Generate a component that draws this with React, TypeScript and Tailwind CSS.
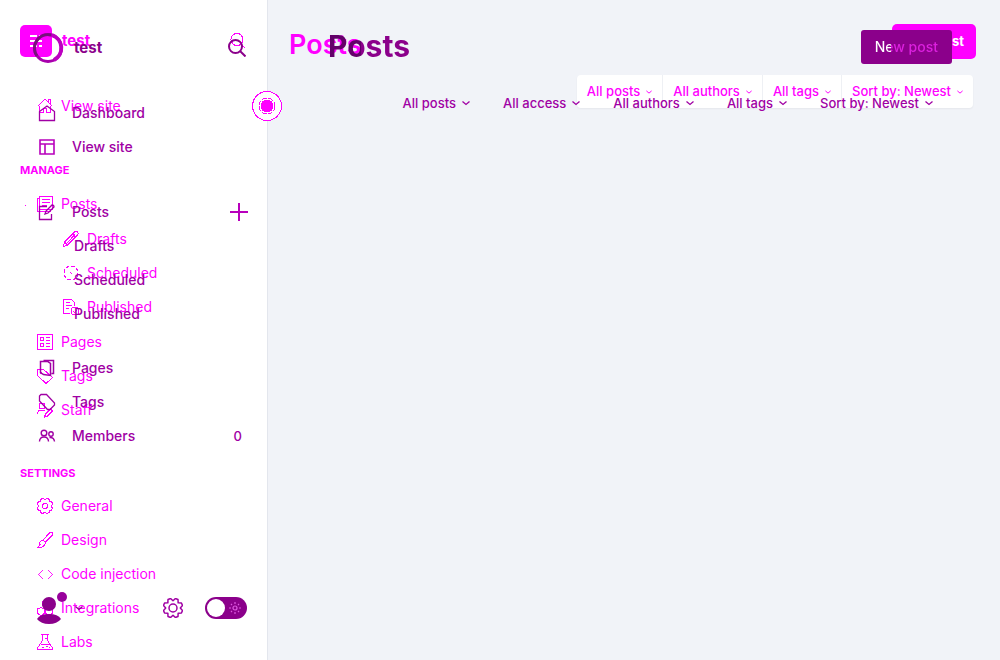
import type { ReactNode } from "react";

type IconName =
  | "house" | "stack" | "pencil" | "clock" | "published" | "list" | "tag" | "staff"
  | "gear" | "brush" | "code" | "modules" | "flask"
  | "home" | "layout" | "edit" | "pages" | "label" | "members";

const gearOutline =
  "M10 2.700 12.450.5 15 1.550 15.150 4.850 18.450 5 19.500 7.550 17.300 10 19.500 12.450 18.450 15 15.150 15.150 15 18.450 12.450 19.500 10 17.300 7.550 19.500 5 18.450 4.850 15.150 1.550 15 .5 12.450 2.700 10 .5 7.550 1.550 5 4.850 4.850 5 1.550 7.550.5z";

const drawings: Record<IconName, ReactNode> = {
  house: <path d="M.5 8.500 8 1l7.500 7.500M11.500 4.500V1.500h2v5M2.500 8v6.500h4v-4h3v4h4V8" />,
  stack: <path d="M2.500.5h13v13h-13zM2.500 2.500h-2v13h13v-2M5 3.500h8M5 6.500h8M5 9.500h5" />,
  pencil: <path d="m.5 15.500 1-4.500L11 1.500q2-2 3.500-.5t-.5 3.500L4.500 14zM1.500 11 5 14.500M4 12l8-8.500M9.500 3l3.500 3.500" />,
  clock: (
    <>
      <circle cx="8" cy="8" r="7" strokeDasharray="3.500 2" />
      <path d="M7 7l2 2" />
    </>
  ),
  published: (
    <>
      <path d="M7 14.500H.5V.5h8l3 3V7M3 3.500h4M3 6.500h6M3 9.500h3" />
      <circle cx="12" cy="12" r="4" />
      <path d="m10 12 1.500 1.500L14 11" />
    </>
  ),
  list: <path d="M.5.5h15v15H.5zM3.500 3.500h3v3h-3zM3.500 9.500h3v3h-3zM8.500 3.500H13M8.500 6.500H13M8.500 9.500H13M8.500 12.500H13" />,
  tag: (
    <>
      <path d="M.5 1.500h6l9 8-6.500 6-8.500-8z" />
      <circle cx="4" cy="5" r="1" />
    </>
  ),
  staff: (
    <>
      <circle cx="5" cy="4" r="3" />
      <path d="M.5 12q0-4 4.500-4 2.500 0 3.500 1.500M7.500 15l1-3 5-5 2 2-5 5z" />
    </>
  ),
  gear: (
    <>
      <circle cx="8" cy="8" r="2.500" />
      <path d={gearOutline} transform="scale(.8)" strokeWidth="1.250" />
    </>
  ),
  brush: <path d="m6 8 6.500-7q2-1.500 3 0t0 2L8.500 10zM6 8Q2 9 3 12.500q-1 2-2.500 3Q8 16 8.500 10" />,
  code: <path d="M5 3.500.5 8 5 12.500M11 3.500 15.500 8 11 12.500" strokeWidth=".9" />,
  modules: (
    <>
      <path d="M5.500 2 8 .5 10.500 2v3.500L8 7 5.500 5.500z" />
      <path d="M.5 9 4 7.500 7.500 9v4.500L4 15.500.5 13.500zM8.500 9 12 7.500 15.500 9v4.500l-3.500 2-3.500-2z" />
    </>
  ),
  flask: <path d="M4 .5h8M5.500.5v6L.5 14v1.500h15V14l-5-7.500v-6M7.500 4H10M3.500 10h9M5 13h2M9 12h2M12 13.500h1" />,
  home: <path d="M.5 6.500 8 1l7.500 5.500v9H.5z" strokeWidth="1.300" />,
  layout: <path d="M1 1h14v14H1zM1 5h14M6 5v10" strokeWidth="1.600" stroke="#b800bc" />,
  edit: <path d="M8 2.500H.5v13h12V10M6 10l1-3 6-6q2 0 2 2L9 9z" strokeWidth="1.300" />,
  pages: <path d="M4.500.5h10v13h-2M1.500 1.500h7l3 2v12l-7-1-3-2z" strokeWidth="1.500" />,
  label: <path d="M.5 2 2 .5h5.500L15.500 9v2L11 15.500H8.500L.5 7z" strokeWidth="1.300" />,
  members: (
    <>
      <circle cx="5" cy="5" r="2.800" strokeWidth="1.400" />
      <circle cx="12" cy="6" r="2.200" strokeWidth="1.400" />
      <path d="M.5 13.500Q.5 9 5 9t4.500 4.500M10.500 9.500q4.500-.5 5 4" strokeWidth="1.400" />
    </>
  ),
};

function Icon({ name, smooth = false }: { name: IconName; smooth?: boolean }) {
  return (
    <svg
      viewBox="0 0 16 16"
      className="size-4 shrink-0 overflow-visible"
      fill="none"
      stroke="currentColor"
      shapeRendering={smooth ? "auto" : "crispEdges"}
      aria-hidden="true"
    >
      {drawings[name]}
    </svg>
  );
}

function Chevron({ small = false }: { small?: boolean }) {
  return (
    <svg viewBox="0 0 8 8" className={small ? "w-1.5 shrink-0" : "w-2 shrink-0"} fill="none" stroke="currentColor" strokeWidth="1.300" aria-hidden="true">
      <path d="m.5 2.500 3.500 3 3.500-3" />
    </svg>
  );
}

function OldItem({ icon, children, sub = false }: { icon: IconName; children: string; sub?: boolean }) {
  return (
    <li>
      <a href="#" className={sub ? "flex h-[34px] items-center gap-2 pl-[63px]" : "flex h-[34px] items-center gap-2 pl-[37px]"}>
        <Icon name={icon} />
        {children}
      </a>
    </li>
  );
}

function NewItem({ icon, children, extra }: { icon?: IconName; children: string; extra?: ReactNode }) {
  return (
    <li className={icon ? "flex h-[34px] items-center pl-[39px] pr-5" : "flex h-[34px] items-center pl-[74px]"}>
      <a href="#" className="flex flex-1 items-center gap-[17px]">
        {icon && <Icon name={icon} smooth />}
        {children}
      </a>
      {extra}
    </li>
  );
}

const oldFilters = ["All posts", "All authors", "All tags", "Sort by: Newest"];
const newFilters = ["All posts", "All access", "All authors", "All tags", "Sort by: Newest"];

function CompactScreen() {
  return (
    <div className="flex text-[#ff00ff] [grid-area:1/1]">
      <aside className="w-[268px] shrink-0 border-r border-[#e3e6ed] bg-white text-sm">
        <div className="flex h-[82px] items-center pl-5 pr-[22px]">
          <svg viewBox="0 0 32 32" className="size-8" aria-hidden="true">
            <rect width="32" height="32" rx="5" fill="currentColor" />
            <path d="M10 11h7M19 11h3M10 16h12M10 21h7M19 21h3" stroke="white" strokeWidth="2" />
          </svg>
          <span className="ml-2.5 flex-1 text-[15px] font-bold">test</span>
          <button aria-label="Search site">
            <svg viewBox="0 0 16 16" className="size-4" fill="none" stroke="currentColor" shapeRendering="crispEdges">
              <circle cx="8" cy="6.500" r="6" />
              <path d="m12 11 4.500 4.500" />
            </svg>
          </button>
        </div>
        <ul className="pt-[7px]">
          <OldItem icon="house">View site</OldItem>
        </ul>
        <h2 className="mt-[39px] pl-5 text-[11px] leading-4 font-bold">MANAGE</h2>
        <ul className="pt-[9px]">
          <li className="relative">
            <span className="absolute left-[25px] top-[18px] size-px bg-current" />
            <ul><OldItem icon="stack">Posts</OldItem></ul>
            <ul className="py-px">
              <OldItem icon="pencil" sub>Drafts</OldItem>
              <OldItem icon="clock" sub>Scheduled</OldItem>
              <OldItem icon="published" sub>Published</OldItem>
            </ul>
          </li>
          <OldItem icon="list">Pages</OldItem>
          <OldItem icon="tag">Tags</OldItem>
          <OldItem icon="staff">Staff</OldItem>
        </ul>
        <h2 className="mt-[38px] pl-5 text-[11px] leading-4 font-bold">SETTINGS</h2>
        <ul className="pt-2">
          <OldItem icon="gear">General</OldItem>
          <OldItem icon="brush">Design</OldItem>
          <OldItem icon="code">Code injection</OldItem>
          <OldItem icon="modules">Integrations</OldItem>
          <OldItem icon="flask">Labs</OldItem>
        </ul>
      </aside>
      <main className="min-w-0 flex-1 bg-[#f1f3f8]">
        <header className="flex items-start justify-between pl-[21px] pr-6 pt-6">
          <h1 className="text-[27px] leading-[42px] font-semibold">Posts</h1>
          <button className="h-[35px] rounded-[5px] bg-[#ff00ff] px-3 text-[13px] font-bold text-white">New post</button>
        </header>
        <div className="mt-[9px] flex justify-end pr-[27px]">
          <div className="flex h-[33px] divide-x divide-[#eef0f4] rounded-[4px] bg-white text-[13px] font-medium shadow-xs">
            {oldFilters.map((filter) => (
              <button key={filter} className="flex items-center gap-1.5 px-2.5">
                {filter}
                <Chevron small />
              </button>
            ))}
          </div>
        </div>
      </main>
    </div>
  );
}

function WideScreen() {
  return (
    <div className="z-10 flex text-[#a000a4] [grid-area:1/1]">
      <aside className="flex w-[268px] shrink-0 flex-col text-sm font-medium">
        <div className="flex h-24 items-center pl-8 pr-[22px] text-[#8b008b]">
          <svg viewBox="0 0 32 32" className="size-8" fill="none" aria-hidden="true">
            <circle cx="16" cy="16" r="13.500" stroke="#a800ac" strokeWidth="3" />
            <path d="M20 3.200A13.500 13.500 0 0 1 22 28" stroke="#bd00c1" strokeWidth="4" />
            <path d="M5 24A13.500 13.500 0 0 1 19 3" stroke="#76127a" strokeWidth="3" />
          </svg>
          <span className="ml-2.5 flex-1 text-[15px] font-bold">test</span>
          <button aria-label="Search">
            <svg viewBox="0 0 18 18" className="size-[18px]" fill="none" stroke="currentColor" strokeWidth="2">
              <circle cx="7.500" cy="7.500" r="6.500" />
              <path d="m12 12 5.500 5.500" />
            </svg>
          </button>
        </div>
        <ul>
          <NewItem icon="home">Dashboard</NewItem>
          <NewItem icon="layout">View site</NewItem>
        </ul>
        <ul className="mt-[31px]">
          <NewItem
            icon="edit"
            extra={
              <button aria-label="Create post">
                <svg viewBox="0 0 18 18" className="size-[18px]" fill="none" stroke="#b800bc" strokeWidth="2">
                  <path d="M9 0v18M0 9h18" />
                </svg>
              </button>
            }
          >
            Posts
          </NewItem>
          <NewItem>Drafts</NewItem>
          <NewItem>Scheduled</NewItem>
          <NewItem>Published</NewItem>
        </ul>
        <ul className="mt-5">
          <NewItem icon="pages">Pages</NewItem>
          <NewItem icon="label">Tags</NewItem>
          <NewItem icon="members" extra={<span className="pr-1.5 text-[13px]">0</span>}>Members</NewItem>
        </ul>
        <div className="mt-auto flex h-[104px] items-center pl-[37px] pr-[21px]">
          <button aria-label="Account" className="flex items-center gap-2 text-[#8b008b]">
            <svg viewBox="0 0 30 34" className="h-[34px] w-[30px]" fill="currentColor" aria-hidden="true">
              <circle cx="12" cy="13" r="7" />
              <path d="M0 28Q3 23 12 23t12 5Q20 33 12 33T0 28z" />
              <circle cx="25" cy="6" r="5" fill="#98009c" />
            </svg>
            <Chevron />
          </button>
          <button aria-label="Settings" className="ml-auto mr-[22px]">
            <svg viewBox="0 0 20 20" className="size-5" fill="none" stroke="currentColor" strokeWidth="1.500" strokeLinejoin="round">
              <circle cx="10" cy="10" r="4" />
              <path d={gearOutline} />
            </svg>
          </button>
          <label className="relative flex h-[22px] w-[42px] items-center rounded-full bg-[#8b008b]">
            <input type="checkbox" aria-label="Dark mode" className="peer absolute inset-0 cursor-pointer appearance-none" />
            <span className="pointer-events-none ml-0.5 size-[18px] rounded-full bg-white peer-checked:translate-x-5" />
            <svg viewBox="0 0 12 12" className="pointer-events-none ml-1 size-3" stroke="#dc58df" fill="none" strokeWidth="1.200" aria-hidden="true">
              <circle cx="6" cy="6" r="2" />
              <path d="M6 0v2M6 10v2M0 6h2M10 6h2M2 2l1 1M9 9l1 1M2 10l1-1M9 3l1-1" />
            </svg>
          </label>
        </div>
      </aside>
      <main className="min-w-0 flex-1">
        <header className="flex items-start justify-between pl-[60px] pr-12 pt-[27px]">
          <h1 className="bg-linear-to-r from-[#64006a] from-[33px] to-[#8b008b] to-[33px] bg-clip-text text-[30px] leading-[38px] font-bold text-transparent">Posts</h1>
          <button className="mt-[3px] h-[34px] rounded-[3px] bg-[#8b008b] px-3.5 text-sm font-medium">
            <span className="bg-linear-to-r from-white from-[16px] to-[#dc20df] to-[16px] bg-clip-text text-transparent">New post</span>
          </button>
        </header>
        <div className="mt-[29px] flex justify-end gap-[33px] pr-[67px] text-[13px] leading-[18px] font-medium">
          {newFilters.map((filter) => (
            <button key={filter} className="flex items-center gap-1.5">
              {filter}
              <Chevron />
            </button>
          ))}
        </div>
      </main>
    </div>
  );
}

export default function App() {
  return (
    <div className="relative grid h-screen grid-rows-[minmax(0,1fr)] overflow-hidden bg-[#f1f3f8] font-['Inter','Liberation_Sans',sans-serif]">
      <CompactScreen />
      <WideScreen />
      <button aria-label="Tour marker" className="absolute left-[252px] top-[91px] z-20">
        <svg viewBox="0 0 30 30" className="size-[30px]" fill="none" stroke="#ff00ff" shapeRendering="crispEdges">
          <circle cx="15" cy="15" r="14.500" fill="white" />
          <circle cx="15" cy="15" r="8" strokeDasharray="5 1.500" />
          <circle cx="15" cy="15" r="6" fill="#ff00ff" />
        </svg>
      </button>
    </div>
  );
}
